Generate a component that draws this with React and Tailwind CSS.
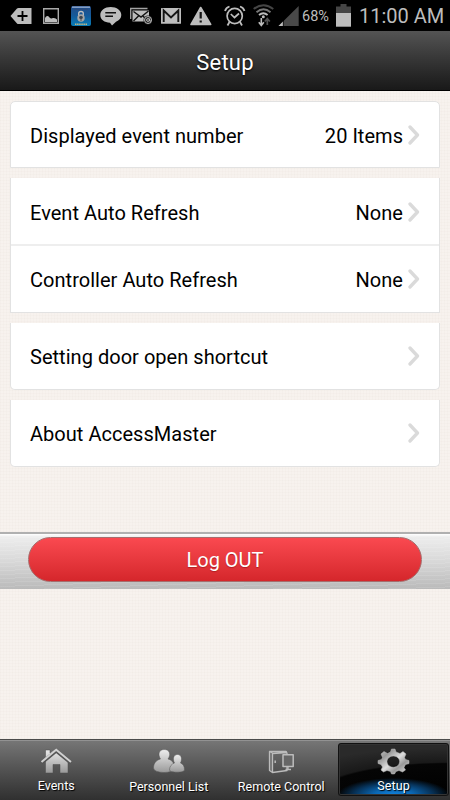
import React from "react";

const G = "#bdbdbd";

function StatusBar() {
  return (
    <div className="flex h-[31px] shrink-0 items-center bg-black text-[#bdbdbd]">
      <svg className="ml-[10px] h-[31px] w-[22px] shrink-0" viewBox="10 0 22 31">
        <path d="M10.5 16 17 8.5Q17.500 8 18.500 8H31.500V24H18.500Q17.500 24 17 23.500Z" fill={G} />
        <path d="M22.500 11v10M17.500 16h10" stroke="#000" strokeWidth="1.800" />
      </svg>
      <svg className="ml-[11px] h-[31px] w-[16px] shrink-0" viewBox="43 0 16 31">
        <path d="M43.700 8.700H58.300V23.300H43.700Z" fill="none" stroke="#a9a9a9" strokeWidth="1.400" />
        <path d="M45 22v-4Q47 14.500 49.500 17.500Q51 19 53 18Q55.500 17.500 57 19.500V22Z" fill={G} />
      </svg>
      <svg className="ml-[12px] h-[31px] w-[20px] shrink-0" viewBox="71 0 20 31">
        <defs>
          <linearGradient id="app" x2="0" y2="1"><stop stopColor="#234b86" /><stop offset=".5" stopColor="#145b9b" /><stop offset="1" stopColor="#087eb8" /></linearGradient>
        </defs>
        <rect x="71" y="6" width="20" height="20" rx="2" fill="url(#app)" />
        <path d="M72 7.200h18" stroke="#8ea6ca" strokeWidth="1.400" />
        <path d="M74 9.300h14" stroke="#2e4978" strokeWidth="1" />
        <path d="M78.700 16v-2.500q0-2 2.300-2t2.300 2V16" fill="none" stroke="#c0c0c0" strokeWidth="1.300" />
        <circle cx="81" cy="18" r="3.700" fill="#a6a6a6" />
        <circle cx="81" cy="17.500" r="1.800" fill="#3c4650" />
        <path d="M81 18v3" stroke="#4d5358" strokeWidth="1" />
        <path d="M75 24.300h12" stroke="#c2b884" strokeWidth="1.500" strokeDasharray="1.500 .6" />
      </svg>
      <svg className="ml-[9px] h-[31px] w-[22px] shrink-0" viewBox="100 0 22 31">
        <path d="M110.700 7C104.800 7 100.300 10.300 100.300 15S104.500 22.500 110 22.700L112 25.500 116 21.700C119.300 20.500 121.300 18 121.300 15 121.300 10.300 116.700 7 110.700 7Z" fill={G} />
        <path d="M105.300 12.700H116M105.300 16.200H113" stroke="#111" strokeWidth="1.500" />
      </svg>
      <svg className="ml-[8px] h-[31px] w-[22px] shrink-0" viewBox="130 0 22 31">
        <path d="M130.700 19V8.500H147.500" fill="none" stroke="#a3a3a3" strokeWidth="1.300" />
        <path d="M132.500 10.500h16.500v11h-16.500Z" fill={G} />
        <path d="M133.500 11.500 141 17 148.500 11M133.500 21l5-5M147.500 21l-4.500-5" fill="none" stroke="#111" strokeWidth="1.400" />
        <circle cx="148" cy="20" r="4.500" fill="#222" />
        <circle cx="148" cy="20" r="3.500" fill="none" stroke={G} strokeWidth="1" />
        <circle cx="148" cy="20" r="1.400" fill="none" stroke={G} strokeWidth="1" />
        <path d="M149.500 18.500v2.500h1.500" fill="none" stroke={G} strokeWidth=".9" />
      </svg>
      <svg className="ml-[9px] h-[31px] w-[20px] shrink-0" viewBox="161 0 20 31">
        <rect x="161" y="8" width="20" height="15.700" rx=".5" fill={G} />
        <path d="M163.700 22V10.500L171 17.500 178.300 10.500V22" fill="none" stroke="#141414" strokeWidth="1.900" />
      </svg>
      <svg className="ml-[9px] h-[31px] w-[22px] shrink-0" viewBox="190 0 22 31">
        <path d="M200.700 7.500 191 24.500H210.700Z" fill={G} stroke={G} strokeWidth="1.600" strokeLinejoin="round" />
        <path d="M200.700 12v6.500M200.700 20.500v2" stroke="#111" strokeWidth="2.200" />
      </svg>
      <svg className="ml-[12px] h-[31px] w-[22px] shrink-0" viewBox="224 0 22 31">
        <circle cx="234.700" cy="16" r="7.600" fill="none" stroke={G} strokeWidth="1.700" />
        <path d="M225 11q1-3.500 4.500-4.500M240 6.500q3.500 1 4.500 4.500M229.500 22l-2 3.500M240 22l2 3.500" fill="none" stroke={G} strokeWidth="1.800" />
        <path d="M230.800 14 234.500 17.500 239 13.500" fill="none" stroke={G} strokeWidth="1.700" />
      </svg>
      <svg className="ml-[7px] h-[31px] w-[22px] shrink-0" viewBox="253 0 22 31" fill="none">
        <path d="M253.700 9Q263.500 1.500 273.300 9" stroke="#454545" strokeWidth="1.900" />
        <path d="M256.500 12.200Q263.500 6.500 270.500 12.200" stroke="#777" strokeWidth="1.900" />
        <path d="M259 15Q263.300 11.500 267.600 15" stroke={G} strokeWidth="1.900" />
        <circle cx="263.300" cy="16.700" r="1.500" fill={G} />
        <path d="M261.300 18v7M258.800 22.300 261.300 25.500 263.800 22.300" stroke={G} strokeWidth="1.600" />
        <path d="M267.300 25v-6M264.800 21.500 267.300 18.500 269.800 21.500" stroke="#515151" strokeWidth="1.700" />
      </svg>
      <svg className="ml-[3px] h-[31px] w-[22px] shrink-0" viewBox="278 0 22 31">
        <path d="M298.700 6V26H278.500Z" fill="#494949" />
        <path d="M283 21.500V26H278.500Z" fill={G} />
        <path d="M283.300 20v6" stroke="#000" strokeWidth=".7" />
      </svg>
      <span className="ml-[2px] w-[34px] shrink-0 whitespace-nowrap pt-[2px] text-[14.500px]">68%</span>
      <svg className="h-[31px] w-[16px] shrink-0" viewBox="336 0 16 31">
        <path d="M336 6.500h4.500V4h6v2.500h4.500V13h-15Z" fill="#454545" />
        <path d="M336 13h15v13.700h-15Z" fill={G} />
      </svg>
      <span className="ml-[7px] shrink-0 whitespace-nowrap pt-[1px] text-[20px]">11:00 AM</span>
    </div>
  );
}

function Row({ label, value, className = "" }) {
  return (
    <div className={"flex items-center pl-[19px] pr-[19px] " + className}>
      <span className="flex-1 whitespace-nowrap pt-[2px]">{label}</span>
      {value && <span className="pt-[2px]">{value}</span>}
      <svg className="ml-[5px] h-[20px] w-[12px]" viewBox="0 0 12 20">
        <path d="M2 2 9.500 10 2 18" fill="none" stroke="#dadada" strokeWidth="3.300" strokeLinecap="round" strokeLinejoin="round" />
      </svg>
    </div>
  );
}

function Tab({ label, children, viewBox, active }) {
  return (
    <div className={active
      ? "mt-[3px] h-[53px] w-[111px] shrink-0 overflow-hidden rounded-[3px] bg-[radial-gradient(ellipse_50%_32%_at_50%_98%,#1283dc_0%,#0b67b3_35%,#07335a_70%,transparent_100%),radial-gradient(ellipse_125%_65%_at_100%_100%,#000_0%,#050505_94%,#191919_98%,#2a2a2a_140%)] bg-no-repeat shadow-[inset_0_0_0_1px_#111,inset_0_0_0_2px_#333]"
      : "w-[112.500px] shrink-0"}>
      <svg className={active ? "-mt-[3px] mx-auto block h-[40px] w-[40px]" : "mx-auto block h-[40px] w-[40px]"} viewBox={viewBox}>{children}</svg>
      <div className={"whitespace-nowrap text-center text-[12.500px] leading-[14px] text-white [text-shadow:1px_1px_1px_#000] " + (active ? "-mt-px pl-px tracking-[0.1px]" : label === "Events" ? "-mt-px" : "")}>{label}</div>
    </div>
  );
}

export default function App() {
  return (
    <div className="flex h-[800px] w-[450px] flex-col overflow-hidden bg-[#f7f2ee] font-[Roboto,sans-serif] text-black">
      <StatusBar />
      <header className="flex h-[60px] shrink-0 items-center justify-center border-b border-black bg-linear-to-b from-[#545454] to-[#191919] pt-[3px] text-[22px] tracking-[0.2px] text-white [text-shadow:0_1px_2px_#000]">
        Setup
      </header>
      <main className="flex flex-1 flex-col bg-[repeating-linear-gradient(90deg,rgba(100,70,40,0.015)_0px_1px,transparent_1px_3px),repeating-linear-gradient(0deg,rgba(100,70,40,0.015)_0px_1px,transparent_1px_3px)]">
        <div className="mx-[10px] mt-[10px] flex flex-col text-[20px] leading-[24px] tracking-[0.03px]">
          <Row label="Displayed event number" value="20 Items" className="h-[67px] rounded-t-[5px] border border-[#e2e2e2] bg-white" />
          <div className="mt-[10px] h-[135px] border-x border-b border-[#e2e2e2] bg-white">
            <Row label="Event Auto Refresh" value="None" className="h-[68px] border-b-2 border-[#eeeeee] pt-px" />
            <Row label="Controller Auto Refresh" value="None" className="h-[66px]" />
          </div>
          <Row label="Setting door open shortcut" className="mt-[10px] h-[67px] rounded-b-[5px] border-x border-b border-[#e2e2e2] bg-white" />
          <Row label="About AccessMaster" className="mt-[10px] h-[67px] rounded-b-[5px] border-x border-b border-[#e2e2e2] bg-white" />
        </div>
        <div className="mt-[65px] h-[57px] border-t-2 border-[#b0b0b0] bg-[repeating-linear-gradient(178deg,rgba(255,255,255,0.1)_0px_1px,transparent_1px_4px),linear-gradient(180deg,#ffffff_0px,#ededed_3px,#d8d8d8_50%,#bababa_100%)] px-[28px] pt-[3px]">
          <div className="flex h-[45px] items-center justify-center rounded-full border-[1.500px] border-[#a66d6d] bg-linear-to-b from-[#fa4950] to-[#d5262b] text-[20px] text-white [text-shadow:0_1px_1px_#b02024]">Log OUT</div>
        </div>
      </main>
      <nav className="flex h-[61px] shrink-0 border-t border-[#4b4b4b] bg-linear-to-b from-[#777777] to-[#303030] shadow-[inset_0_1px_0_#929292]">
        <Tab label="Events" viewBox="36 740 40 40">
          <defs>
            <linearGradient id="silver" x2="0" y2="1"><stop stopColor="#eeeeee" /><stop offset="1" stopColor="#999" /></linearGradient>
          </defs>
          <path d="M45.500 757V750H50V753L56.200 748.500 68 758.500V773H60V764.500H53V773H45.500Z" fill="url(#silver)" stroke="#4c4c4c" strokeWidth=".5" />
          <path d="M41.500 763 56.200 750.800 71 763" fill="none" stroke="#555" strokeWidth="3.500" />
          <path d="M41.500 762 56.200 749.800 71 762" fill="none" stroke="#d0d0d0" strokeWidth="2" />
        </Tab>
        <Tab label="Personnel List" viewBox="149 740 40 40">
          <g fill="url(#silver)" stroke="#555" strokeWidth=".5">
            <path d="M160.500 759C157.800 755 158.500 749.500 164.300 749.500S171 755 168 759C172 760 174.500 763 174.500 768 174.500 774 153.500 774 153.500 768 153.500 763 156.500 760 160.500 759Z" />
            <path d="M174.500 763C172.300 759 173.500 754.500 177.500 754.500S182.500 759 180.500 763C183 764 184.500 766 184.500 770 184.500 773 169.500 773 169.500 770 169.500 766.500 171.500 764 174.500 763Z" />
          </g>
        </Tab>
        <Tab label="Remote Control" viewBox="261.500 740 40 40">
          <g fill="none" stroke="#bcbcbc" strokeWidth="1.300" strokeLinejoin="round">
            <path d="M273 752.800 270 751.500V770.500L273 772.500" fill="#707070" />
            <path d="M270 751.500H286.500L287.500 753V770.500L273 772.500V753.500L287.500 752.500" />
            <path d="M275.700 760.500v2.500" strokeWidth="1.500" />
            <path d="M283.500 754.700H293.700V766.500H283.500Z" fill="#666" strokeWidth="1.500" />
            <path d="M288.500 767v2M286 769.500h5.500" />
          </g>
        </Tab>
        <Tab label="Setup" active viewBox="373 740 40 40">
          <defs>
            <linearGradient id="metal" x2="1" y2="1"><stop stopColor="#ccc" /><stop offset=".25" stopColor="#999" /><stop offset=".5" stopColor="#ddd" /><stop offset=".7" stopColor="#999" /><stop offset="1" stopColor="#eee" /></linearGradient>
          </defs>
          <path fillRule="evenodd" fill="url(#metal)" stroke="#bbb" strokeWidth=".5" strokeLinejoin="round" d="M390.500 752 391.500 749H395L396 752 400 753.500 403 751.500 406 754 404.500 757.500 405.500 759.500 409 760.500V763.500L405.500 764.500 404 767.500 405.500 770 402.500 772 399 770.500 396 771.500 394.500 774H391.500L390.500 771.500 387 770.500 383.500 772 381 770 382.500 767 381 764.500 378 763.500V760.500L381.500 759.500 382.500 757.500 381 754 384 751.500 387.500 753.500ZM393.300 756A6.300 5.600 0 1 0 393.310 756Z" />
        </Tab>
      </nav>
    </div>
  );
}
